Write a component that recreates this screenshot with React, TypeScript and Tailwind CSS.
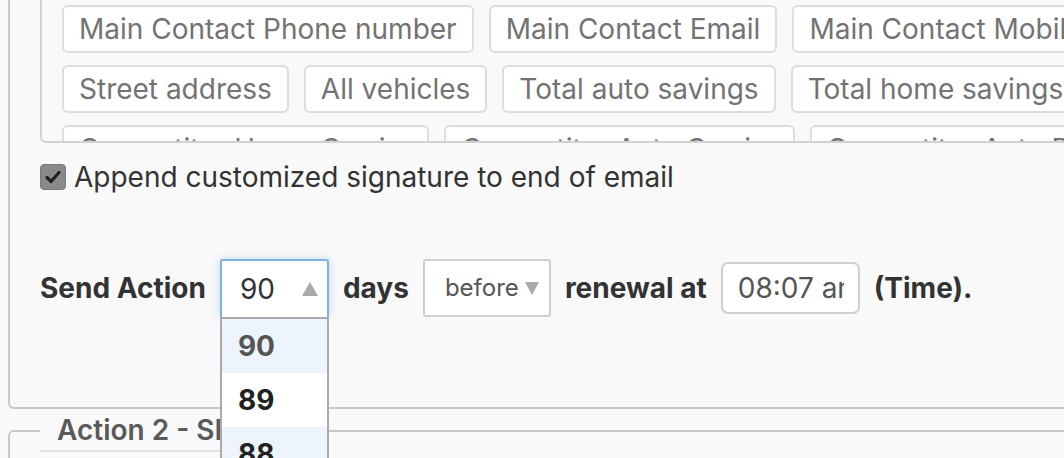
import React from "react";

const font = { fontFamily: "Inter, 'Noto Sans', sans-serif" };

function Tag({ children }: { children: React.ReactNode }) {
  return (
    <div className="h-[48px] shrink-0 flex items-center px-[15px] border-2 border-[#dddddd] rounded-[6px] bg-white text-[28px] text-[#737373] whitespace-nowrap leading-none">
      {children}
    </div>
  );
}

export default function App() {
  return (
    <div className="w-[1064px] h-[458px] overflow-hidden bg-[#f9f9f9] relative" style={font}>
      {/* outer action box */}
      <div className="ml-[8px] w-[1100px] border-l-2 border-b-2 border-[#c8c8c8] rounded-bl-[6px] pl-[30px] pb-[90px]">
        {/* tags box */}
        <div className="h-[143px] w-[1100px] border-l-2 border-b-2 border-[#d2d2d2] rounded-bl-[6px] overflow-hidden pl-[20px] pt-[5px] flex flex-col gap-[12px]">
          <div className="flex gap-[15px]">
            <Tag>Main Contact Phone number</Tag>
            <Tag>Main Contact Email</Tag>
            <Tag>Main Contact Mobile number</Tag>
          </div>
          <div className="flex gap-[15px]">
            <Tag>Street address</Tag>
            <Tag>All vehicles</Tag>
            <Tag>Total auto savings</Tag>
            <Tag>Total home savings</Tag>
          </div>
          <div className="flex gap-[15px]">
            <Tag>Competitor Home Carrier</Tag>
            <Tag>Competitor Auto Carrier</Tag>
            <Tag>Competitor Auto Premium</Tag>
          </div>
        </div>

        {/* checkbox row */}
        <div className="mt-[20px] flex items-center gap-[8px] h-[28px]">
          <div className="w-[26px] h-[26px] rounded-[4px] bg-[#8a8a8a] border border-[#7a7a7a] flex items-center justify-center">
            <svg width="18" height="18" viewBox="0 0 18 18">
              <path d="M3 9.5 L7 13.5 L15 4.5" stroke="#222" strokeWidth="3.2" fill="none" strokeLinecap="round" strokeLinejoin="round" />
            </svg>
          </div>
          <span className="text-[28px] text-[#333] leading-none whitespace-nowrap">Append customized signature to end of email</span>
        </div>

        {/* send action row */}
        <div className="mt-[68px] flex items-center gap-[14px] text-[28px] leading-none whitespace-nowrap">
          <span className="font-bold text-[#333]">Send Action</span>
          <div className="relative w-[109px] h-[58px] shrink-0">
            <div className="w-full h-full bg-white border-2 border-b-0 border-[#7fb1e8] rounded-t-[3px] shadow-[0_0_10px_rgba(110,160,230,0.35)] flex items-center pl-[18px] pr-[8px]">
              <span className="text-[#333]">90</span>
              <svg className="ml-auto" width="18" height="16" viewBox="0 0 18 16">
                <path d="M9 1 L17 15 L1 15 Z" fill="#aaaaaa" />
              </svg>
            </div>
            <div className="absolute left-0 top-[58px] w-[109px] border-2 border-[#aaaaaa] bg-white z-10 font-bold">
              <div className="h-[54px] flex items-center pl-[16px] bg-[#edf4fd] text-[#555]">90</div>
              <div className="h-[54px] flex items-center pl-[16px] bg-white text-[#222]">89</div>
              <div className="h-[54px] flex items-center pl-[16px] bg-[#edf4fd] text-[#222]">88</div>
              <div className="h-[54px] flex items-center pl-[16px] bg-white text-[#222]">87</div>
            </div>
          </div>
          <span className="font-bold text-[#333]">days</span>
          <div className="w-[128px] h-[58px] shrink-0 bg-white border-2 border-[#cfcfcf] rounded-[3px] flex items-center pl-[20px] pr-[10px]">
            <span className="text-[24px] text-[#555]">before</span>
            <svg className="ml-auto shrink-0" width="14" height="14" viewBox="0 0 14 14">
              <path d="M0 1 L14 1 L7 14 Z" fill="#aaaaaa" />
            </svg>
          </div>
          <span className="font-bold text-[#333]">renewal at</span>
          <div className="w-[139px] h-[52px] shrink-0 bg-white border-2 border-[#cfcfcf] rounded-[7px] flex items-center pl-[15px] pr-[14px]">
            <div className="overflow-hidden whitespace-nowrap text-[#555] w-full">08:07 am</div>
          </div>
          <span className="font-bold text-[#333]">(Time).</span>
        </div>
      </div>

      {/* second action fieldset */}
      <fieldset className="ml-[8px] mt-[1px] w-[1100px] h-[200px] border-2 border-[#c8c8c8] rounded-[6px] pl-[30px]">
        <legend className="w-[280px] h-[42px] border-b-2 border-[#e2e2e2] pl-[17px] text-[28px] leading-[40px] font-semibold text-[#5a5a5a] whitespace-nowrap">
          Action 2 - SMS
        </legend>
      </fieldset>
    </div>
  );
}
